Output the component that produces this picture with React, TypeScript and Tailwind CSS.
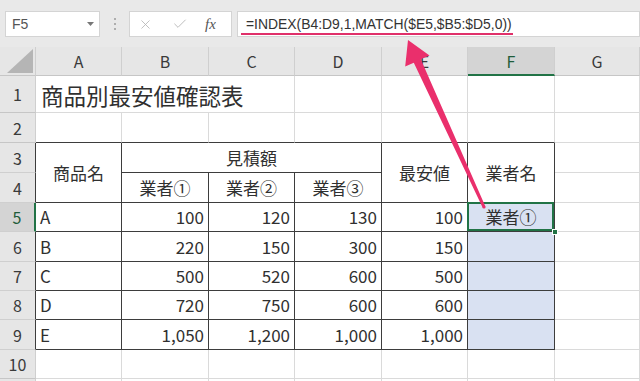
import { X, Check } from "lucide-react";

const jp = { fontFamily: '"Noto Sans CJK JP", "Noto Sans", sans-serif' };

const hdr = "bg-[#e6e6e6] border-r border-b border-r-[#cfcfcf] border-b-[#c6c6c6] flex items-center justify-center text-[16px] text-[#3a3a3a]";
const light = "border-r border-b border-[#dadada]";
const dark = "border-r border-b border-[#3d3d3d]";
const rowDark = "bg-[#e6e6e6] border-r border-b border-r-[#3d3d3d] border-b-[#cfcfcf] flex items-center justify-center text-[16px] text-[#3a3a3a]";

const data = [
  { name: "A", vals: ["100", "120", "130", "100"] },
  { name: "B", vals: ["220", "150", "300", "150"] },
  { name: "C", vals: ["500", "520", "600", "500"] },
  { name: "D", vals: ["720", "750", "600", "600"] },
  { name: "E", vals: ["1,050", "1,200", "1,000", "1,000"] },
];

function Arrow() {
  // pink callout arrow from F5 up to the formula bar
  return (
    <svg className="absolute inset-0 pointer-events-none" width="640" height="381" viewBox="0 0 640 381">
      <polygon
        fill="#ea2f6c"
        points="408,40 429.5,55.5 420.8,59.3 485.4,206.4 482.6,207.6 413.8,62.7 405.2,66.6"
      />
      <circle cx="484" cy="207" r="1.6" fill="#ea2f6c" />
    </svg>
  );
}

function FormulaBar() {
  return (
    <div className="h-[47px] bg-[#e9e9e9] flex items-start pt-[11px]" style={{ fontFamily: '"Liberation Sans", Arial, sans-serif' }}>
      <div className="ml-[5px] w-[95px] h-[26px] bg-white border border-[#d4d4d4] flex items-center justify-between pl-[6px] pr-[5px]">
        <span className="text-[14px] text-[#555]">F5</span>
        <svg width="7" height="4" viewBox="0 0 7 4"><polygon points="0,0 7,0 3.5,4" fill="#777" /></svg>
      </div>
      <div className="w-[29px] h-[26px] flex flex-col items-center justify-center gap-[3px]">
        <span className="w-[2px] h-[2px] bg-[#9a9a9a] rounded-full" />
        <span className="w-[2px] h-[2px] bg-[#9a9a9a] rounded-full" />
        <span className="w-[2px] h-[2px] bg-[#9a9a9a] rounded-full" />
      </div>
      <div className="w-[103px] h-[26px] bg-white border border-[#d4d4d4] flex items-center pl-[8px]">
        <X size={15} strokeWidth={1.3} className="text-[#b3b3b3]" />
        <Check size={16} strokeWidth={1.3} className="text-[#b3b3b3] ml-[19px]" />
        <span className="ml-[17px] text-[15px] italic text-[#555]" style={{ fontFamily: '"Liberation Serif", serif' }}>fx</span>
      </div>
      <div className="ml-[5px] flex-1 h-[26px] bg-white border border-[#d4d4d4] flex items-center">
        <span className="ml-[3px] pl-[5px] pr-[1px] border-b-2 border-[#e0306a] text-[13.9px] leading-[17px] text-[#333] pt-[2px]">
          =INDEX(B4:D9,1,MATCH($E5,$B5:$D5,0))
        </span>
      </div>
    </div>
  );
}

export default function App() {
  return (
    <div className="relative w-[640px] h-[381px] overflow-hidden bg-white">
      <FormulaBar />
      <div
        className="grid grid-cols-[36px_86px_87px_86px_87px_86px_87px_85px] grid-rows-[29px_37px_30px_30px_30px_29px_30px_29px_29px_30px_29px_20px] text-[#303030]"
        style={jp}
      >
        {/* column headers */}
        <div className="bg-[#e6e6e6] border-r border-b border-r-[#cfcfcf] border-b-[#c6c6c6] flex items-end justify-end pr-[2px] pb-[2px]">
          <svg width="26" height="24" viewBox="0 0 26 24"><polygon points="26,0 26,24 0,24" fill="#b5b5b5" /></svg>
        </div>
        {["A", "B", "C", "D", "E"].map((l) => (
          <div key={l} className={hdr}>{l}</div>
        ))}
        <div className="bg-[#d4d4d4] border-r border-b-2 border-r-[#cfcfcf] border-b-[#217346] flex items-center justify-center text-[16px] text-[#1f5c3a]">F</div>
        <div className={hdr}>G</div>

        {/* row 1 */}
        <div className={hdr}>1</div>
        <div className={`${light} col-span-3 flex items-center pl-[5px] pt-[3px] text-[22.5px]`}>商品別最安値確認表</div>
        <div className={light} />
        <div className={light} />
        <div className={light} />
        <div className={light} />

        {/* row 2 */}
        <div className={hdr}>2</div>
        {[0, 1, 2, 3, 4, 5].map((i) => (
          <div key={i} className="border-r border-b border-r-[#dadada] border-b-[#3d3d3d]" />
        ))}
        <div className={light} />

        {/* rows 3-4: table heading */}
        <div className={rowDark}>3</div>
        <div className={`${dark} row-span-2 flex items-center justify-center text-[17px]`}>商品名</div>
        <div className={`${dark} col-span-3 flex items-center justify-center text-[17px]`}>見積額</div>
        <div className={`${dark} row-span-2 flex items-center justify-center text-[17px]`}>最安値</div>
        <div className={`${dark} row-span-2 flex items-center justify-center text-[17px]`}>業者名</div>
        <div className={light} />
        <div className={rowDark}>4</div>
        <div className={`${dark} flex items-center justify-center text-[17px]`}>業者①</div>
        <div className={`${dark} flex items-center justify-center text-[17px]`}>業者②</div>
        <div className={`${dark} flex items-center justify-center text-[17px]`}>業者③</div>
        <div className={light} />

        {/* rows 5-9: data */}
        {data.map((r, i) => (
          <div key={r.name} className="contents">
            {i === 0 ? (
              <div className="bg-[#d4d4d4] border-r-2 border-b border-r-[#217346] border-b-[#cfcfcf] flex items-center justify-center text-[16px] text-[#1f5c3a]">5</div>
            ) : (
              <div className={rowDark}>{i + 5}</div>
            )}
            <div className={`${dark} flex items-center pl-[4px] text-[17px]`}>{r.name}</div>
            {r.vals.map((v, j) => (
              <div key={j} className={`${dark} flex items-center justify-end pr-[4px] text-[17px]`}>{v}</div>
            ))}
            {i === 0 ? (
              <div className={`${dark} relative bg-[#d9e1f2] flex items-center justify-center text-[17px]`}>
                業者①
                <div className="absolute -left-px -top-px right-0 bottom-0 border-2 border-[#217346]" />
                <div className="absolute -right-[4px] -bottom-[4px] w-[6px] h-[6px] bg-[#217346] border border-white" />
              </div>
            ) : (
              <div className={`${dark} bg-[#d9e1f2]`} />
            )}
            <div className={light} />
          </div>
        ))}

        {/* row 10 and the top edge of row 11 */}
        <div className={hdr}>10</div>
        {[0, 1, 2, 3, 4, 5, 6].map((i) => (
          <div key={i} className={light} />
        ))}
        <div className={hdr} />
        {[0, 1, 2, 3, 4, 5, 6].map((i) => (
          <div key={i} className={light} />
        ))}
      </div>
      <Arrow />
    </div>
  );
}
